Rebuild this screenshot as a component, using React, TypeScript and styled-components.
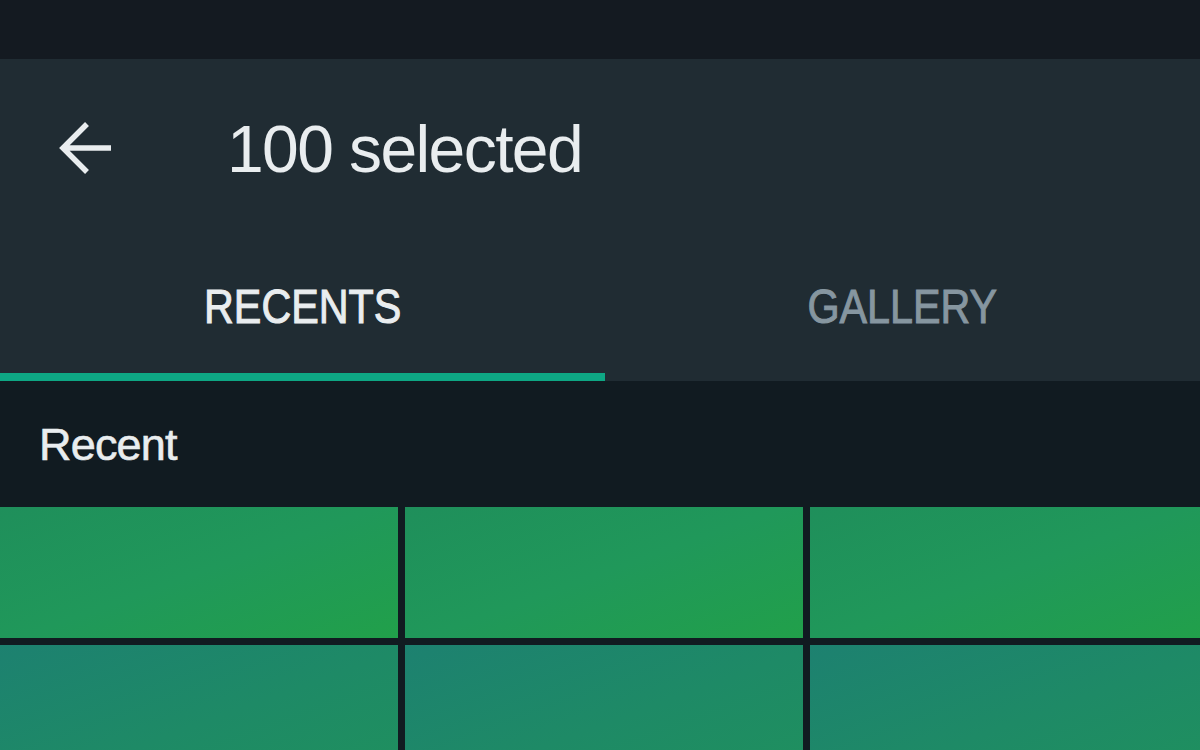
import React from "react";
import styled, { createGlobalStyle } from "styled-components";

const Global = createGlobalStyle`
  html, body { margin: 0; padding: 0; background: #111b21; }
  body { width: 1200px; height: 750px; overflow: hidden; font-family: "Liberation Sans", Arial, sans-serif; }
`;

const Screen = styled.div`
  width: 1200px;
  height: 750px;
  display: flex;
  flex-direction: column;
  background: #111b21;
  overflow: hidden;
`;

const StatusBar = styled.div`
  height: 59px;
  flex: none;
  background: #141a21;
`;

const AppBar = styled.header`
  flex: none;
  background: #202c33;
  display: flex;
  flex-direction: column;
`;

const TopRow = styled.div`
  height: 178px;
  display: flex;
  align-items: center;
  padding-left: 52px;
`;

const BackButton = styled.button`
  width: 60px;
  height: 60px;
  padding: 0;
  border: 0;
  background: transparent;
  display: flex;
  align-items: center;
  justify-content: center;
  cursor: pointer;
  margin-right: 115px;
`;

const Title = styled.h1`
  margin: 0;
  font-family: "Liberation Sans", Arial, sans-serif;
  font-weight: 400;
  font-size: 66px;
  line-height: 1;
  letter-spacing: -1.6px;
  color: #e9edef;
  padding-top: 2px;
`;

const Tabs = styled.nav`
  height: 144px;
  display: grid;
  grid-template-columns: 605px 1fr;
`;

const Tab = styled.div<{ $active?: boolean }>`
  display: flex;
  align-items: center;
  justify-content: center;
  border-bottom: 8px solid ${(p) => (p.$active ? "#0ea784" : "transparent")};
`;

const TabLabel = styled.span<{ $active?: boolean }>`
  display: inline-block;
  font-family: "Liberation Sans", Arial, sans-serif;
  font-weight: 400;
  font-size: 48px;
  line-height: 1;
  color: ${(p) => (p.$active ? "#e9edef" : "#8696a0")};
  -webkit-text-stroke: 1px ${(p) => (p.$active ? "#e9edef" : "#8696a0")};
  transform: scaleX(0.86);
  margin-top: 4px;
`;

const SectionHeader = styled.div`
  height: 126px;
  flex: none;
  display: flex;
  align-items: center;
  padding-left: 39px;
  background: #111b21;
`;

const SectionTitle = styled.h2`
  margin: 0;
  font-family: "Liberation Sans", Arial, sans-serif;
  font-weight: 400;
  font-size: 45px;
  line-height: 1;
  letter-spacing: -0.8px;
  color: #e9edef;
  -webkit-text-stroke: 0.6px #e9edef;
`;

const Grid = styled.div`
  display: grid;
  grid-template-columns: 398px 398px 398px;
  grid-auto-rows: 131px;
  gap: 7px;
  background: #111b21;
`;

const Tile = styled.div<{ $row: number }>`
  background: ${(p) =>
    p.$row === 0
      ? "linear-gradient(160deg, #1f8f5b 0%, #20985a 50%, #21a04a 100%)"
      : "linear-gradient(160deg, #1d8170 0%, #1e8a66 55%, #1f905e 100%)"};
`;

const ArrowIcon = () => (
  <svg width="60" height="60" viewBox="0 0 60 60" fill="none">
    <path
      d="M11 30 H59 M35 6 L11 30 L35 54"
      stroke="#e9edef"
      strokeWidth="5.5"
      strokeLinecap="butt"
      strokeLinejoin="miter"
    />
  </svg>
);

export default function App() {
  const tiles = [0, 0, 0, 1, 1, 1];
  return (
    <>
      <Global />
      <Screen>
        <StatusBar />
        <AppBar>
          <TopRow>
            <BackButton aria-label="Back">
              <ArrowIcon />
            </BackButton>
            <Title>100 selected</Title>
          </TopRow>
          <Tabs>
            <Tab $active>
              <TabLabel $active>RECENTS</TabLabel>
            </Tab>
            <Tab>
              <TabLabel>GALLERY</TabLabel>
            </Tab>
          </Tabs>
        </AppBar>
        <SectionHeader>
          <SectionTitle>Recent</SectionTitle>
        </SectionHeader>
        <Grid>
          {tiles.map((r, i) => (
            <Tile key={i} $row={r} />
          ))}
        </Grid>
      </Screen>
    </>
  );
}
